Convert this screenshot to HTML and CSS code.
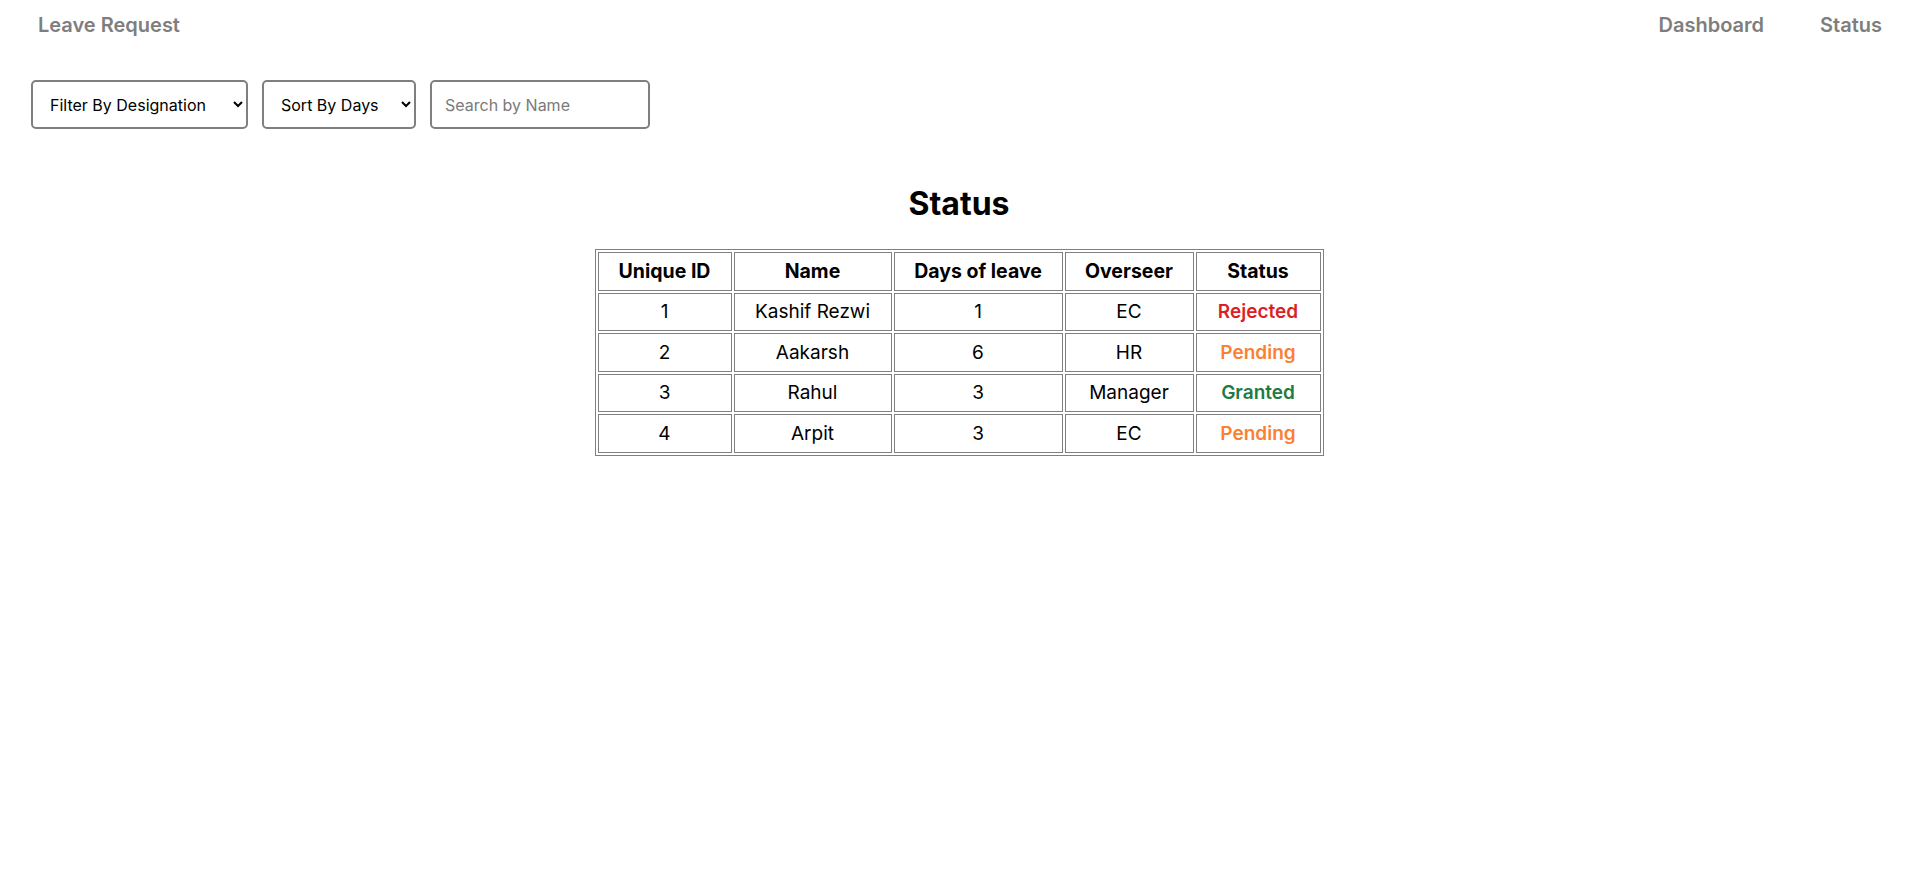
FILE: index.html
```html
<!DOCTYPE html>
<html lang="en">
<head>
<meta charset="utf-8">
<title>Leave Request - Status</title>
<link rel="stylesheet" href="styles.css">
</head>
<body>
<header class="nav">
  <a class="brand" href="#">Leave Request</a>
  <nav class="links">
    <a href="#">Dashboard</a>
    <a href="#">Status</a>
  </nav>
</header>
<div class="filters">
  <select class="control sel-filter">
    <option>Filter By Designation</option>
  </select>
  <select class="control sel-sort">
    <option>Sort By Days</option>
  </select>
  <input class="control search" type="text" placeholder="Search by Name">
</div>
<main class="content">
  <h1 class="title">Status</h1>
  <table class="status-table">
    <colgroup>
      <col class="c1"><col class="c2"><col class="c3"><col class="c4"><col class="c5">
    </colgroup>
    <thead>
      <tr><th>Unique ID</th><th>Name</th><th>Days of leave</th><th>Overseer</th><th>Status</th></tr>
    </thead>
    <tbody>
      <tr><td>1</td><td>Kashif Rezwi</td><td>1</td><td>EC</td><td class="st rejected">Rejected</td></tr>
      <tr><td>2</td><td>Aakarsh</td><td>6</td><td>HR</td><td class="st pending">Pending</td></tr>
      <tr><td>3</td><td>Rahul</td><td>3</td><td>Manager</td><td class="st granted">Granted</td></tr>
      <tr><td>4</td><td>Arpit</td><td>3</td><td>EC</td><td class="st pending">Pending</td></tr>
    </tbody>
  </table>
</main>
</body>
</html>
```

FILE: styles.css
```css
* { box-sizing: border-box; }
html, body { margin: 0; padding: 0; background: #fff; }
body {
  font-family: Inter, "Noto Sans", Arial, sans-serif;
  color: #000;
}
.nav {
  display: flex;
  justify-content: space-between;
  align-items: center;
  height: 50px;
  padding: 0 36px 0 38px;
}
.nav a {
  color: #7e7e7e;
  text-decoration: none;
  font-weight: 600;
  font-size: 20px;
}
.links { display: flex; gap: 56px; }
.filters {
  display: flex;
  gap: 14px;
  padding: 30px 0 0 31px;
}
.control {
  height: 49px;
  border: 2px solid #7f7f7f;
  border-radius: 5px;
  background: #fff;
  font-family: inherit;
  font-size: 16px;
  color: #000;
  padding: 0 10px 0 13px;
}
.sel-filter { width: 217px; }
.sel-sort { width: 154px; padding-left: 13px; }
.search { width: 220px; padding-left: 13px; }
.search::placeholder { color: #7a7a7a; }
.content {
  display: flex;
  flex-direction: column;
  align-items: center;
}
.title {
  margin: 56px 0 26px;
  font-size: 32px;
  font-weight: 700;
  line-height: 38px;
  height: 38px;
}
.status-table {
  border: 1px solid #808080;
  border-spacing: 2px;
  table-layout: fixed;
  width: 729px;
}
.c1 { width: 134px; }
.c2 { width: 158px; }
.c3 { width: 169px; }
.c4 { width: 129px; }
.c5 { width: 125px; }
.status-table th, .status-table td {
  border: 1px solid #808080;
  height: 38.5px;
  padding: 0;
  text-align: center;
  font-size: 19px;
}
.status-table th { font-weight: 700; font-size: 19.5px; }
.st { font-weight: 600; }
.rejected { color: #dc1f26; }
.pending { color: #fb7f34; }
.granted { color: #1e7b43; }
```
